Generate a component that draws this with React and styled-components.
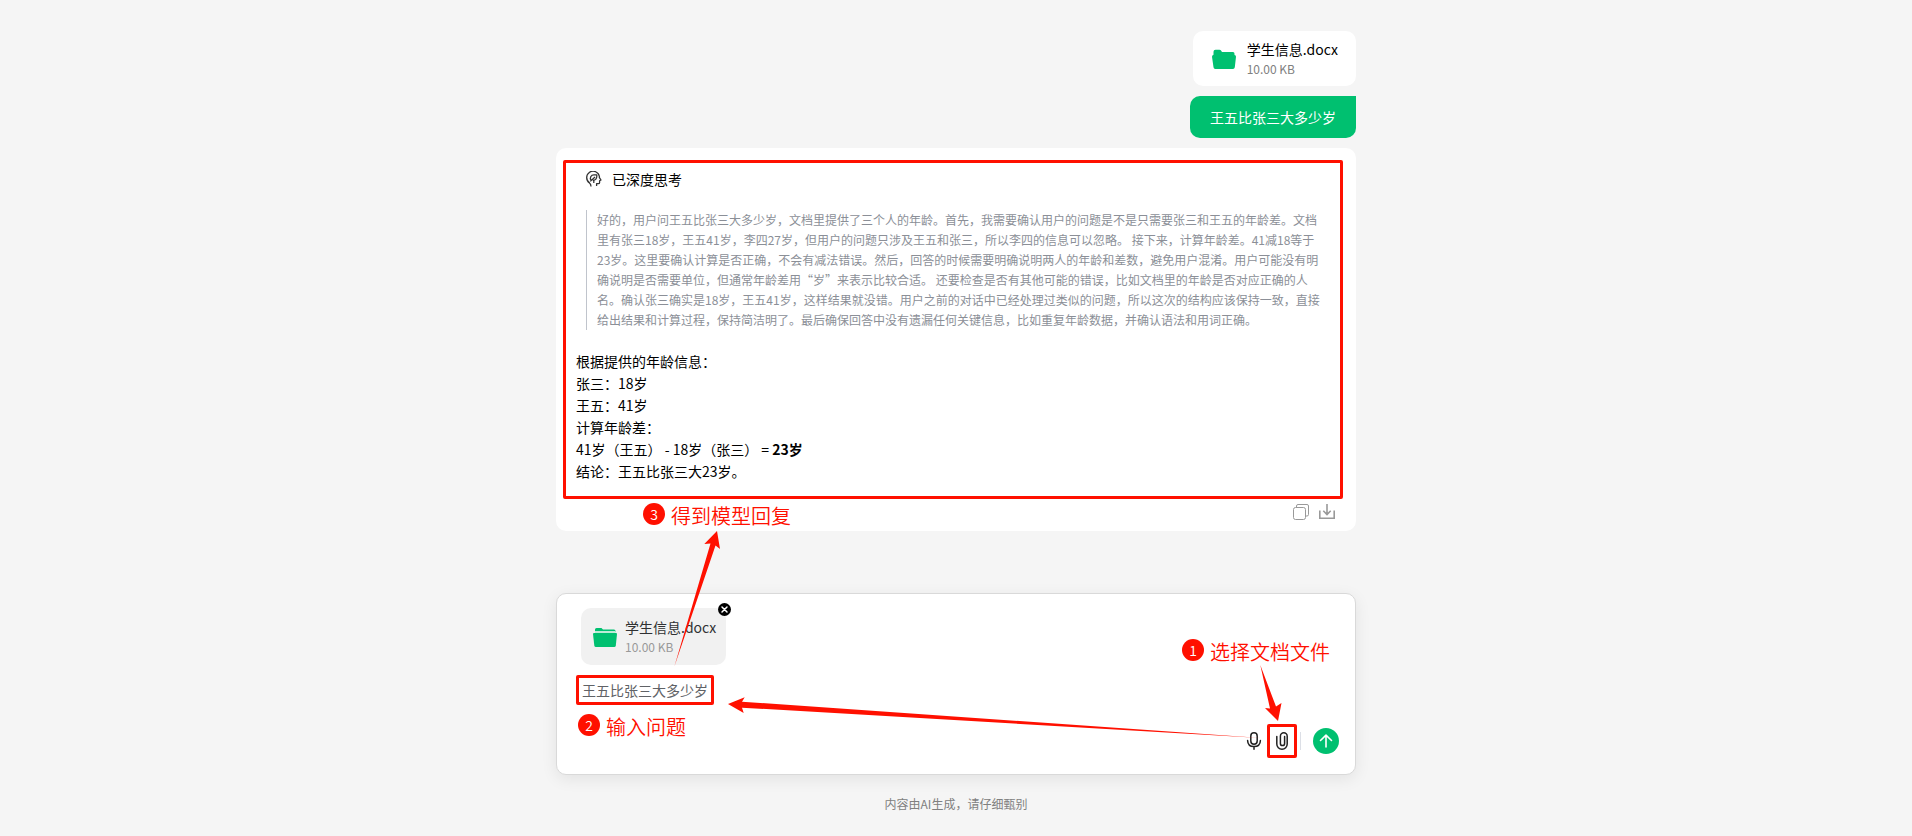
import { useState } from "react";
import styled, { createGlobalStyle } from "styled-components";

const GlobalStyle = createGlobalStyle`
    * {
        box-sizing: border-box;
    }
    body {
        margin: 0;
        background-color: #f5f5f5;
        color: #000;
        font-family: "Noto Sans CJK SC", "Noto Sans", sans-serif;
        font-size: 14px;
        line-height: 22px;
    }
    button {
        padding: 0;
        border: 0;
        background: none;
        color: inherit;
        font: inherit;
        cursor: pointer;
    }
    svg {
        display: block;
    }
`;

const Page = styled.main`
    position: relative;
    width: 100%;
    max-width: 800px;
    margin: 0 auto;
    padding: 31px 0 20px;
`;
const Messages = styled.section`
    display: flex;
    flex-direction: column;
    gap: 10px;
    margin-bottom: 62px;
`;

const FileCard = styled.div`
    position: relative;
    display: flex;
    align-items: center;
    gap: ${({ $sent }) => ($sent ? "11px" : "8px")};
    width: fit-content;
    padding: ${({ $sent }) => ($sent ? "8px 18px 7px 19px" : "9px 10px 8px 12px")};
    border-radius: 10px;
    background-color: ${({ $sent }) => ($sent ? "#fff" : "#f1f1f1")};
    align-self: flex-end;
`;
const FileInfo = styled.div`
    display: flex;
    flex-direction: column;
    line-height: 20px;
`;
const FileName = styled.span`
    color: ${({ $sent }) => ($sent ? "#000" : "#303133")};
`;
const FileSize = styled.span`
    font-size: 12px;
    color: ${({ $sent }) => ($sent ? "#808080" : "#999")};
`;
const RemoveButton = styled.button`
    position: absolute;
    top: -5px;
    right: -5px;
`;

const Bubble = styled.p`
    align-self: flex-end;
    margin: 0;
    padding: 10px 20px;
    border-radius: 10px 0 10px 10px;
    background-color: #00c070;
    color: #fff;
`;

const Reply = styled.article`
    display: flex;
    flex-direction: column;
    padding: 20px 20px 11px;
    border-radius: 10px;
    background-color: #fff;
`;
const ReplyBody = styled.div`
    position: relative;
`;
const ThinkingTitle = styled.h2`
    display: flex;
    align-items: center;
    gap: 10px;
    margin: 0 10px 20px;
    font-size: 14px;
    font-weight: 400;
    line-height: 22px;
`;
const Thinking = styled.blockquote`
    margin: 0 10px 20px;
    padding-left: 10px;
    border-left: 1px solid #c0c4cc;
    color: #8b8f97;
    font-size: 12px;
    line-height: 20px;
`;
const Line = styled.p`
    margin: 0;
`;
const Actions = styled.div`
    display: flex;
    justify-content: flex-end;
    gap: 10px;
    margin-top: 22px;
    padding-right: 1px;
    color: #999;
`;

const Composer = styled.form`
    display: flex;
    flex-direction: column;
    padding: 14px 16px 20px 19px;
    border: 1px solid #d9d9d9;
    border-radius: 10px;
    background-color: #fff;
    box-shadow: 0 4px 16px rgba(0, 0, 0, 0.08);
`;
const Attachments = styled.div`
    display: flex;
    padding-left: 5px;
`;
const Question = styled.div`
    position: relative;
    display: flex;
    width: 148px;
    margin-top: 14px;
    padding-left: 6px;
`;
const QuestionInput = styled.input`
    width: 100%;
    padding: 0;
    border: 0;
    outline: 0;
    background: none;
    color: #606266;
    font: inherit;
    line-height: 22px;
`;
const Toolbar = styled.div`
    display: flex;
    align-items: center;
    justify-content: flex-end;
    gap: 12px;
    margin-top: 27px;
    color: #222;
`;
const Tools = styled.div`
    display: flex;
    align-items: center;
    gap: 12px;
    padding-right: 10px;
    border-right: 1px solid #dcdfe6;
`;
const ToolButton = styled.button`
    position: relative;
    display: flex;
    justify-content: center;
    width: 16px;
`;
const SendButton = styled.button`
    display: flex;
    align-items: center;
    justify-content: center;
    width: 26px;
    height: 26px;
    border-radius: 50%;
    background-color: #00c070;
    color: #fff;
`;
const Notice = styled.p`
    margin: 20px 0 0;
    color: #808080;
    font-size: 12px;
    line-height: 18px;
    text-align: center;
`;

const Outline = styled.span`
    position: absolute;
    inset: ${({ $inset }) => $inset};
    border: 3px solid #ff1000;
    border-radius: 2px;
    pointer-events: none;
`;
const Arrows = styled.svg`
    position: absolute;
    top: 0;
    left: 0;
    fill: #ff1000;
    pointer-events: none;
`;
const Step = styled.div`
    position: absolute;
    top: ${({ $top }) => $top}px;
    left: ${({ $left }) => $left}px;
    display: flex;
    align-items: flex-start;
    gap: 6px;
    color: #ff1000;
    font-size: 20px;
    font-weight: 350;
    line-height: 26px;
    white-space: nowrap;
`;
const StepNumber = styled.span`
    width: 22px;
    height: 22px;
    border-radius: 50%;
    background-color: #ff1000;
    color: #fff;
    font-size: 14px;
    line-height: 22px;
    text-align: center;
`;

const steps = [
    { number: 1, text: "选择文档文件", top: 639, left: 626 },
    { number: 2, text: "输入问题", top: 714, left: 22 },
    { number: 3, text: "得到模型回复", top: 503, left: 87 },
];

const answer = [
    "根据提供的年龄信息：",
    "张三：18岁",
    "王五：41岁",
    "计算年龄差：",
];

function FolderIcon({ open }) {
    return (
        <svg width="24" height="20" viewBox="0 0 24 20" fill="#00c070">
            {open ? (
                <>
                    <path d="M2 2.500Q2 1 3.500 1H8.500L10 2.500H21Q22.500 2.500 22.500 4V5H2Z" />
                    <path d="M2 4H22.500V6.500H2Z" fill="#bdebd6" />
                    <path d="M1 6H23Q24 6 24 7L22.800 18.500Q22.600 20 21.200 20H3Q1.500 20 1.300 18.500L0 7Q0 6 1 6Z" />
                </>
            ) : (
                <path d="M1.500 5V2.700Q1.500 .7 3.500 .7H7.500Q8.500 .7 9 1.500L10 2.900H21Q22.500 2.900 22.500 4.700V5.900Q24 6.200 24 7.700L22.800 18.200Q22.500 20 21 20H3.200Q1.700 20 1.500 18.200L0 7.700Q0 6.200 1.500 5.700Z" />
            )}
        </svg>
    );
}

function ThinkIcon() {
    return (
        <svg
            width="16"
            height="16"
            viewBox="0 0 16 16"
            fill="none"
            stroke="#333"
            strokeWidth="1.300"
            strokeLinejoin="round"
        >
            <path d="M5 15.500C5 13.500 4.600 12.800 3.500 11.900A6.400 6.400 0 1 1 13.400 5.500V6.600L15 9L13.600 9.800V11.400Q13.600 12.600 12.300 12.600H10.600V15" />
            <path d="M5.200 9.200C3.200 7 5 3.900 8 3.900H10.800C11.200 7 9.800 9.300 6.800 9.300M9 6L4.300 10.400M7.800 9.200V12" />
        </svg>
    );
}

function CloseIcon() {
    return (
        <svg width="13" height="13" viewBox="0 0 13 13">
            <circle cx="6.500" cy="6.500" r="6.500" />
            <path
                d="M4 4L9 9M9 4L4 9"
                stroke="#fff"
                strokeWidth="1.500"
                strokeLinecap="round"
            />
        </svg>
    );
}

function CopyIcon() {
    return (
        <svg
            width="16"
            height="16"
            viewBox="0 0 16 16"
            fill="none"
            stroke="currentColor"
        >
            <rect x=".5" y="3.500" width="12" height="12" rx="2" />
            <path d="M3.500 3.500V2Q3.500 .5 5 .5H14Q15.500 .5 15.500 2V10.500Q15.500 12 14 12H12.500" />
        </svg>
    );
}

function DownloadIcon() {
    return (
        <svg
            width="16"
            height="16"
            viewBox="0 0 16 16"
            fill="none"
            stroke="currentColor"
            strokeWidth="1.600"
        >
            <path d="M.8 6.500V14.300H15.200V6.500M8 0V10.300M4.300 6.800L8 10.500L11.700 6.800" />
        </svg>
    );
}

function MicIcon() {
    return (
        <svg
            width="16"
            height="18"
            viewBox="0 0 16 18"
            fill="none"
            stroke="currentColor"
            strokeWidth="1.500"
            strokeLinecap="round"
        >
            <rect x="4.800" y=".8" width="6.400" height="11.400" rx="3.200" />
            <path d="M1.600 8.500Q1.800 14.600 8 14.600Q14.200 14.600 14.400 8.500M8 14.800V17.200" />
        </svg>
    );
}

function ClipIcon() {
    return (
        <svg
            width="12"
            height="18"
            viewBox="0 0 12 18"
            fill="none"
            stroke="currentColor"
            strokeWidth="1.500"
            strokeLinecap="round"
        >
            <path d="M8.600 4.500V11.500A2.100 2.100 0 0 1 4.400 11.500V4.200A3.300 3.300 0 0 1 11.200 4.200V12A5.200 5.200 0 0 1 .8 12V4.500" />
        </svg>
    );
}

function SendIcon() {
    return (
        <svg
            width="14"
            height="14"
            viewBox="0 0 14 14"
            fill="none"
            stroke="currentColor"
            strokeWidth="1.600"
            strokeLinecap="round"
            strokeLinejoin="round"
        >
            <path d="M7 13V1.500M1.500 6.500L7 1.200L12.500 6.500" />
        </svg>
    );
}

function FileItem({ sent, onRemove }) {
    return (
        <FileCard $sent={sent}>
            <FolderIcon open={!sent} />
            <FileInfo>
                <FileName $sent={sent}>学生信息.docx</FileName>
                <FileSize $sent={sent}>10.00 KB</FileSize>
            </FileInfo>
            {onRemove && (
                <RemoveButton type="button" aria-label="移除" onClick={onRemove}>
                    <CloseIcon />
                </RemoveButton>
            )}
        </FileCard>
    );
}

function App() {
    const [question, setQuestion] = useState("王五比张三大多少岁");
    const [attached, setAttached] = useState(true);

    return (
        <>
            <GlobalStyle />
            <Page>
                <Messages>
                    <FileItem sent />
                    <Bubble>王五比张三大多少岁</Bubble>
                    <Reply>
                        <ReplyBody>
                            <ThinkingTitle>
                                <ThinkIcon />
                                已深度思考
                            </ThinkingTitle>
                            <Thinking>
                                好的，用户问王五比张三大多少岁，文档里提供了三个人的年龄。首先，我需要确认用户的问题是不是只需要张三和王五的年龄差。文档里有张三18岁，王五41岁，李四27岁，但用户的问题只涉及王五和张三，所以李四的信息可以忽略。
                                接下来，计算年龄差。41减18等于23岁。这里要确认计算是否正确，不会有减法错误。然后，回答的时候需要明确说明两人的年龄和差数，避免用户混淆。用户可能没有明确说明是否需要单位，但通常年龄差用“岁”来表示比较合适。
                                还要检查是否有其他可能的错误，比如文档里的年龄是否对应正确的人名。确认张三确实是18岁，王五41岁，这样结果就没错。用户之前的对话中已经处理过类似的问题，所以这次的结构应该保持一致，直接给出结果和计算过程，保持简洁明了。最后确保回答中没有遗漏任何关键信息，比如重复年龄数据，并确认语法和用词正确。
                            </Thinking>
                            {answer.map((line) => (
                                <Line key={line}>{line}</Line>
                            ))}
                            <Line>
                                41岁（王五） - 18岁（张三） = <b>23岁</b>
                            </Line>
                            <Line>结论：王五比张三大23岁。</Line>
                            <Outline $inset="-8px -7px -17px -13px" />
                        </ReplyBody>
                        <Actions>
                            <button type="button" aria-label="复制">
                                <CopyIcon />
                            </button>
                            <button type="button" aria-label="下载">
                                <DownloadIcon />
                            </button>
                        </Actions>
                    </Reply>
                </Messages>

                <Composer onSubmit={(e) => e.preventDefault()}>
                    {attached && (
                        <Attachments>
                            <FileItem onRemove={() => setAttached(false)} />
                        </Attachments>
                    )}
                    <Question>
                        <QuestionInput
                            aria-label="问题"
                            value={question}
                            onChange={(e) => setQuestion(e.target.value)}
                        />
                        <Outline $inset="-4px 10px -4px 0" />
                    </Question>
                    <Toolbar>
                        <Tools>
                            <ToolButton type="button" aria-label="语音">
                                <MicIcon />
                            </ToolButton>
                            <ToolButton type="button" aria-label="附件">
                                <ClipIcon />
                                <Outline $inset="-8px -7px" />
                            </ToolButton>
                        </Tools>
                        <SendButton type="submit" aria-label="发送">
                            <SendIcon />
                        </SendButton>
                    </Toolbar>
                </Composer>
                <Notice>内容由AI生成，请仔细甄别</Notice>

                <Arrows width="800" height="836" viewBox="0 0 800 836">
                    <path d="M704.300 665L714 708.500L709 708L722 721L725.500 703L720 706.500Z" />
                    <path d="M705 738L186 701.700L188.700 697.300L172 704L187.700 713L186 707.700Z" />
                    <path d="M118.300 666.700L154.500 543.500L148.300 544L161 531L164 549L159.500 545.500Z" />
                </Arrows>
                {steps.map(({ number, text, top, left }) => (
                    <Step key={number} $top={top} $left={left}>
                        <StepNumber>{number}</StepNumber>
                        {text}
                    </Step>
                ))}
            </Page>
        </>
    );
}

export default App;
